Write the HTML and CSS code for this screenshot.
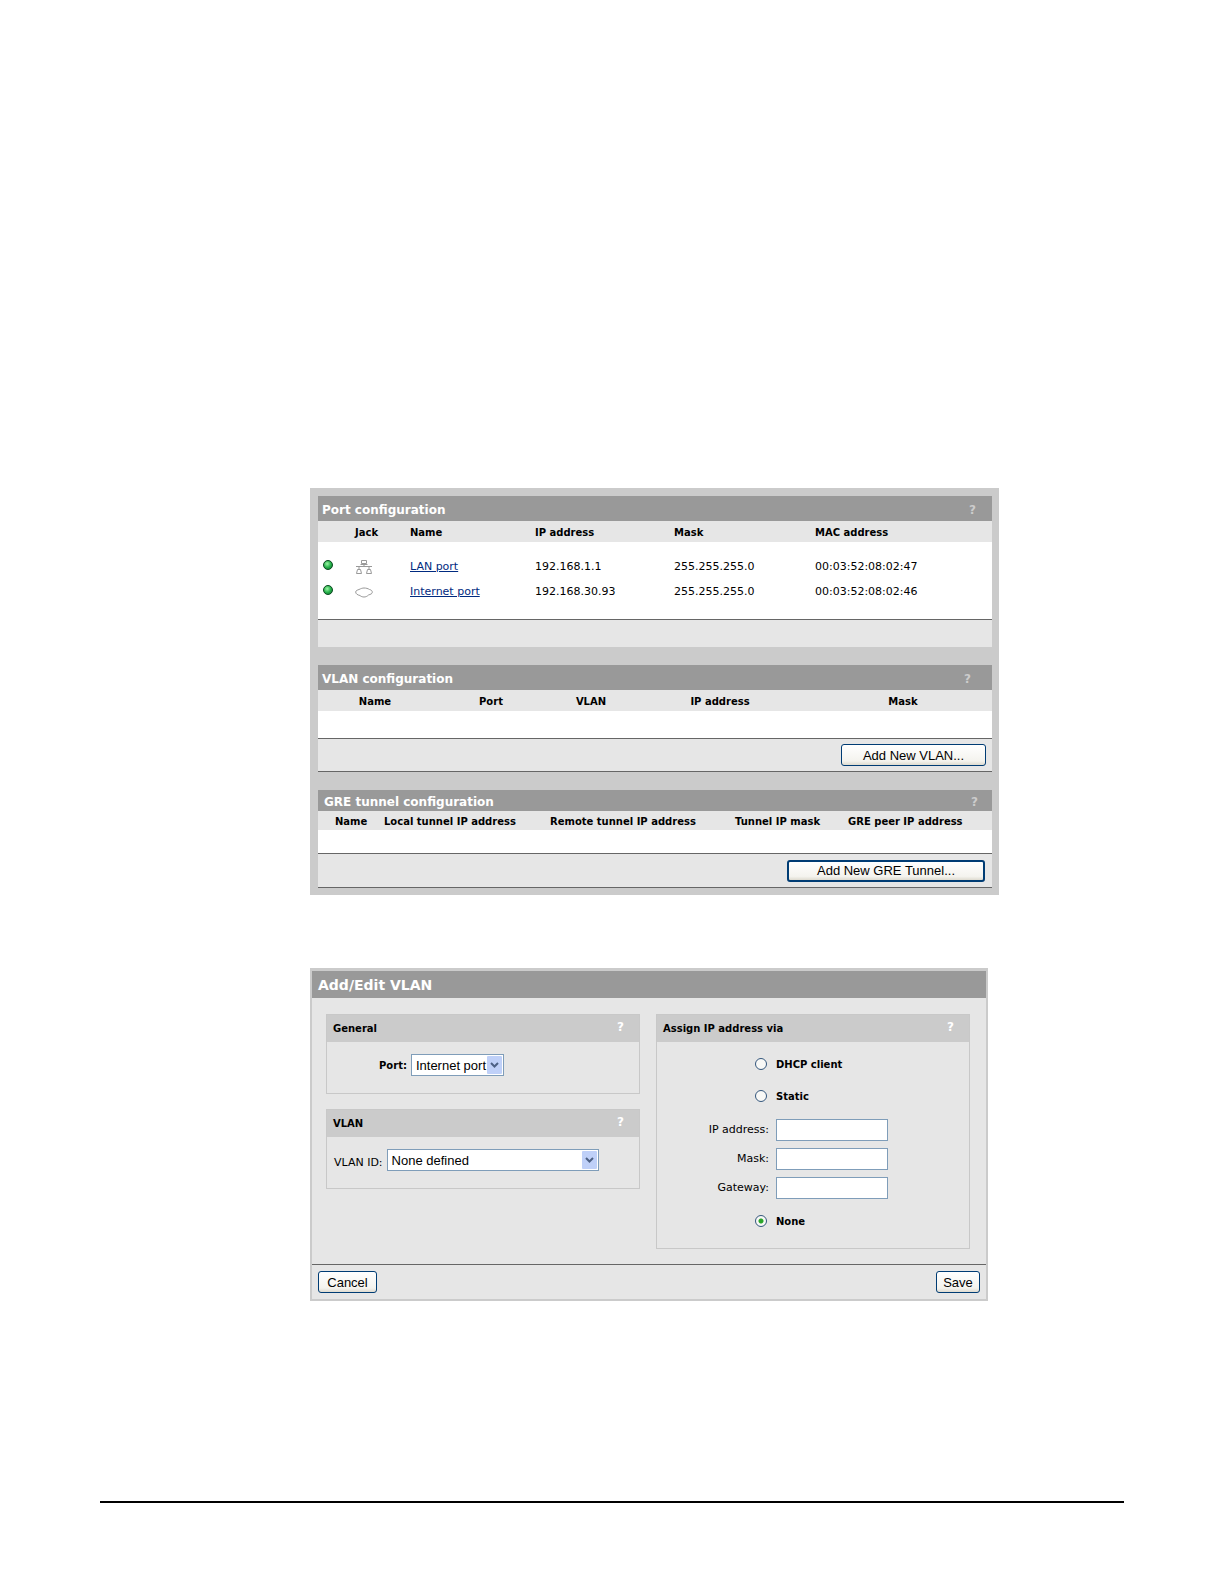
FILE: index.html
```html
<!DOCTYPE html>
<html lang="en">
<head>
    <meta charset="utf-8">
    <title>Port configuration</title>
    <link rel="stylesheet" href="styles.css">
</head>
<body>
    <main class="page">
        <div class="ports-panel">
            <section class="config">
                <div class="title-bar ports-title">
                    <h2>Port configuration</h2>
                    <a class="help" href="#">?</a>
                </div>
                <table class="ports-table">
                    <thead>
                        <tr>
                            <th class="col-status"></th>
                            <th class="col-jack">Jack</th>
                            <th class="col-name">Name</th>
                            <th class="col-ip">IP address</th>
                            <th class="col-mask">Mask</th>
                            <th>MAC address</th>
                        </tr>
                    </thead>
                    <tbody>
                        <tr class="spacer"><td colspan="6"></td></tr>
                        <tr>
                            <td><span class="status"></span></td>
                            <td>
                                <svg class="jack" width="18" height="16" viewBox="0 0 18 16" fill="none" stroke="#999">
                                    <path d="M6.500 1.500h5v3h-5zM5.500 5.500h7M9 5.500v2M1 7.500h16M4 7.500v3M14 7.500v3M2.500 10.500h3l1 4h-5zM12.500 10.500h3l1 4h-5z"/>
                                </svg>
                            </td>
                            <td><a href="#">LAN port</a></td>
                            <td>192.168.1.1</td>
                            <td>255.255.255.0</td>
                            <td>00:03:52:08:02:47</td>
                        </tr>
                        <tr>
                            <td><span class="status"></span></td>
                            <td>
                                <svg class="jack" width="18" height="16" viewBox="0 0 18 16" fill="none" stroke="#999">
                                    <path d="M0.700 8C0.700 6.500 2.500 6 4 5.500C6 4.500 7.500 4 9 4C11 4 13 4.500 14.500 5.500C16.500 6 17.300 7 17.300 8.200C17.300 9.800 15.500 10.300 13.500 11C12 12.500 10.500 13 9 13C7.500 13 6 12.500 5 11.500C2.500 11 0.700 9.800 0.700 8z"/>
                                </svg>
                            </td>
                            <td><a href="#">Internet port</a></td>
                            <td>192.168.30.93</td>
                            <td>255.255.255.0</td>
                            <td>00:03:52:08:02:46</td>
                        </tr>
                        <tr class="spacer-bottom"><td colspan="6"></td></tr>
                    </tbody>
                </table>
                <div class="actions actions-empty"></div>
            </section>

            <section class="config">
                <div class="title-bar vlan-title">
                    <h2>VLAN configuration</h2>
                    <a class="help" href="#">?</a>
                </div>
                <table class="vlan-table">
                    <thead>
                        <tr>
                            <th class="col-name">Name</th>
                            <th class="col-port">Port</th>
                            <th class="col-vlan">VLAN</th>
                            <th class="col-ip">IP address</th>
                            <th class="col-mask">Mask</th>
                        </tr>
                    </thead>
                    <tbody>
                        <tr><td colspan="5"></td></tr>
                    </tbody>
                </table>
                <div class="actions">
                    <button type="button" class="btn btn-vlan">Add New VLAN...</button>
                </div>
            </section>

            <section class="config">
                <div class="title-bar gre-title">
                    <h2>GRE tunnel configuration</h2>
                    <a class="help" href="#">?</a>
                </div>
                <table class="gre-table">
                    <thead>
                        <tr>
                            <th class="col-name">Name</th>
                            <th class="col-local">Local tunnel IP address</th>
                            <th class="col-remote">Remote tunnel IP address</th>
                            <th class="col-mask">Tunnel IP mask</th>
                            <th>GRE peer IP address</th>
                        </tr>
                    </thead>
                    <tbody>
                        <tr><td colspan="5"></td></tr>
                    </tbody>
                </table>
                <div class="actions actions-gre">
                    <button type="button" class="btn btn-gre">Add New GRE Tunnel...</button>
                </div>
            </section>
        </div>

        <form class="vlan-form">
            <h1>Add/Edit VLAN</h1>
            <div class="form-body">
                <div class="form-column">
                    <section class="box">
                        <div class="box-head">
                            <h3>General</h3>
                            <a class="help" href="#">?</a>
                        </div>
                        <div class="select-row port-row">
                            <label for="port">Port:</label>
                            <select id="port">
                                <option>Internet port</option>
                                <option>LAN port</option>
                            </select>
                        </div>
                    </section>
                    <section class="box">
                        <div class="box-head">
                            <h3>VLAN</h3>
                            <a class="help" href="#">?</a>
                        </div>
                        <div class="select-row vlan-row">
                            <label for="vlanId">VLAN ID:</label>
                            <select id="vlanId">
                                <option>None defined</option>
                            </select>
                        </div>
                    </section>
                </div>
                <section class="box">
                    <div class="box-head">
                        <h3>Assign IP address via</h3>
                        <a class="help" href="#">?</a>
                    </div>
                    <div class="assign">
                        <div class="radio-row">
                            <input type="radio" name="assign" id="dhcp">
                            <label for="dhcp">DHCP client</label>
                        </div>
                        <div class="radio-row">
                            <input type="radio" name="assign" id="static">
                            <label for="static">Static</label>
                        </div>
                        <div class="fields">
                            <div class="field-row">
                                <label for="ip">IP address:</label>
                                <input type="text" id="ip">
                            </div>
                            <div class="field-row">
                                <label for="mask">Mask:</label>
                                <input type="text" id="mask">
                            </div>
                            <div class="field-row">
                                <label for="gateway">Gateway:</label>
                                <input type="text" id="gateway">
                            </div>
                        </div>
                        <div class="radio-row">
                            <input type="radio" name="assign" id="none" checked>
                            <label for="none">None</label>
                        </div>
                    </div>
                </section>
            </div>
            <div class="form-actions">
                <button type="button" class="btn btn-cancel">Cancel</button>
                <button type="button" class="btn btn-save">Save</button>
            </div>
        </form>

        <hr class="page-rule">
    </main>
</body>
</html>
```
FILE: styles.css
```css
* {
    box-sizing: border-box;
}
body {
    margin: 0;
    background-color: white;
    color: black;
    font-family: Verdana, "DejaVu Sans", sans-serif;
    font-size: 11px;
}
h1, h2, h3 {
    margin: 0;
}
.page {
    padding: 488px 100px 80px;
}

/* Port, VLAN and GRE lists */
.ports-panel {
    display: flex;
    flex-direction: column;
    gap: 18px;
    margin: 0 125px 0 210px;
    padding: 8px 7px 7px 8px;
    background-color: #cbcbcb;
}
.title-bar {
    display: flex;
    justify-content: space-between;
    align-items: center;
    height: 25px;
    padding: 3px 16px 0 4px;
    background-color: #999;
    color: white;
}
.title-bar h2 {
    font-size: 12px;
}
.vlan-title {
    padding-top: 2px;
    padding-right: 21px;
}
.gre-title {
    height: 21px;
    padding-left: 6px;
    padding-right: 14px;
}
.help {
    color: #ccc;
    font-size: 12px;
    font-weight: bold;
    text-decoration: none;
}

table {
    width: 100%;
    table-layout: fixed;
    border-collapse: collapse;
    background-color: white;
}
th, td {
    padding: 0;
    text-align: left;
    white-space: nowrap;
}
th {
    height: 21px;
    padding-top: 2px;
    background-color: #e6e6e6;
    font-size: 10px;
}
td {
    height: 25px;
}
td a {
    color: #002a80;
}
.ports-table .spacer td {
    height: 12px;
}
.ports-table .spacer-bottom td {
    height: 15px;
}
.ports-table .col-status {
    width: 37px;
}
.ports-table .col-jack {
    width: 55px;
}
.ports-table .col-name {
    width: 125px;
}
.ports-table .col-ip {
    width: 139px;
}
.ports-table .col-mask {
    width: 141px;
}
/* Green light */
.status {
    display: block;
    width: 10px;
    height: 10px;
    margin: 0 0 3px 5px;
    border: 1px solid #0d4a22;
    border-radius: 50%;
    background: radial-gradient(circle at 40% 35%, #9df5a5, #28b34c 50%, #0a6a2a);
}
.jack {
    display: block;
}

.vlan-table th {
    text-align: center;
}
.vlan-table td {
    height: 27px;
}
.vlan-table .col-name {
    width: 114px;
}
.vlan-table .col-port {
    width: 118px;
}
.vlan-table .col-vlan {
    width: 82px;
}
.vlan-table .col-ip {
    width: 176px;
}
.vlan-table .col-mask {
    padding-left: 6px;
}

.gre-table th {
    height: 19px;
}
.gre-table td {
    height: 23px;
}
.gre-table .col-name {
    width: 66px;
    padding-left: 17px;
}
.gre-table .col-local {
    width: 166px;
}
.gre-table .col-remote {
    width: 185px;
}
.gre-table .col-mask {
    width: 113px;
}

.actions {
    display: flex;
    justify-content: flex-end;
    align-items: center;
    height: 34px;
    padding-right: 6px;
    border-top: 1px solid #666;
    border-bottom: 1px solid #666;
    background-color: #e6e6e6;
}
.actions-empty {
    height: 28px;
    border-bottom: none;
}
.actions-gre {
    height: 35px;
    padding-right: 7px;
}
.btn {
    height: 22px;
    padding: 0;
    border: 1px solid #003c74;
    border-radius: 3px;
    background: linear-gradient(white, #f4f3ee 80%, #dedbd0);
    color: black;
    font-family: "Liberation Sans", Arial, sans-serif;
    font-size: 13px;
    cursor: pointer;
}
.btn-vlan {
    width: 145px;
}
/* Default button has the thick border */
.btn-gre {
    width: 198px;
    border-width: 2px;
}
.btn-cancel {
    width: 59px;
}
.btn-save {
    width: 44px;
}

/* Add/Edit VLAN form */
.vlan-form {
    margin: 73px 136px 0 210px;
    border: 2px solid #cbcbcb;
    border-top-width: 3px;
    background-color: #e6e6e6;
}
.vlan-form h1 {
    padding: 2px 0 0 6px;
    background-color: #999;
    color: white;
    font-size: 14px;
    line-height: 25px;
}
.form-body {
    display: grid;
    grid-template-columns: 1fr 1fr;
    gap: 16px;
    padding: 16px 16px 15px 14px;
}
.form-column {
    display: flex;
    flex-direction: column;
    gap: 15px;
}
.box {
    border: 1px solid #c8c8c8;
}
.box-head {
    display: flex;
    justify-content: space-between;
    align-items: center;
    height: 27px;
    padding: 0 15px 0 6px;
    background-color: #cbcbcb;
}
.box-head h3 {
    font-size: 10px;
}
.box-head .help {
    padding-bottom: 3px;
    color: white;
}
.select-row {
    display: flex;
    align-items: center;
    gap: 4px;
    padding: 12px 0 17px;
}
.port-row {
    padding-left: 52px;
    font-size: 10px;
    font-weight: bold;
}
.vlan-row {
    padding-left: 7px;
}
.vlan-row label {
    padding-top: 4px;
}
select {
    appearance: none;
    height: 22px;
    padding: 0 20px 0 4px;
    border: 1px solid #7f9db9;
    border-radius: 0;
    background: white url("data:image/svg+xml,%3Csvg xmlns='http://www.w3.org/2000/svg' width='15' height='18'%3E%3Crect width='15' height='18' rx='1' fill='%23bfd0f8'/%3E%3Cpath d='M4 7l3.500 3.500L11 7' fill='none' stroke='%234d6185' stroke-width='2'/%3E%3C/svg%3E") no-repeat right 1px center;
    color: black;
    font-family: "Liberation Sans", Arial, sans-serif;
    font-size: 13px;
}
#port {
    width: 93px;
    padding-right: 16px;
}
#vlanId {
    width: 212px;
}

.assign {
    padding: 6px 0 11px;
}
.radio-row, .field-row {
    display: grid;
    grid-template-columns: 112px 112px;
    gap: 7px;
    align-items: center;
}
.radio-row {
    height: 32px;
    font-size: 10px;
    font-weight: bold;
}
.fields {
    padding: 3px 0;
}
.field-row {
    height: 29px;
}
.field-row label {
    text-align: right;
}
input[type="text"] {
    width: 100%;
    height: 22px;
    border: 1px solid #7f9db9;
    background-color: white;
}
input[type="radio"] {
    appearance: none;
    justify-self: end;
    width: 12px;
    height: 12px;
    margin: 0 2px 0 0;
    border: 1px solid #33567c;
    border-radius: 50%;
    background-color: #f8f8f6;
}
input[type="radio"]:checked {
    background-image: radial-gradient(circle, #2aa52a 2px, transparent 3px);
}
.form-actions {
    display: flex;
    justify-content: space-between;
    padding: 6px;
    border-top: 1px solid #666;
}

.page-rule {
    height: 2px;
    margin: 200px 0 0;
    border: none;
    background-color: black;
}
```
